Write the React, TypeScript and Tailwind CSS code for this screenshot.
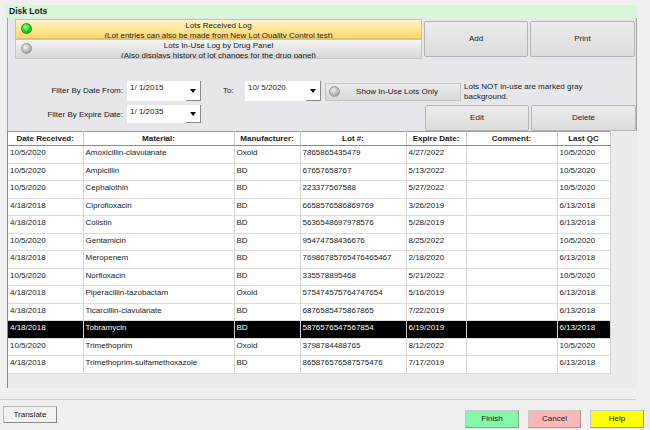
import React from 'react';

type Lot = {
  received: string;
  material: string;
  maker: string;
  lot: string;
  expire: string;
  comment: string;
  lastQc: string;
  selected?: boolean;
};

const lots: Lot[] = [
  { received: '10/5/2020', material: 'Amoxicillin-clavulanate', maker: 'Oxoid', lot: '7865865435479', expire: '4/27/2022', comment: '', lastQc: '10/5/2020' },
  { received: '10/5/2020', material: 'Ampicillin', maker: 'BD', lot: '67657658767', expire: '5/13/2022', comment: '', lastQc: '10/5/2020' },
  { received: '10/5/2020', material: 'Cephalothin', maker: 'BD', lot: '223377567588', expire: '5/27/2022', comment: '', lastQc: '10/5/2020' },
  { received: '4/18/2018', material: 'Ciprofloxacin', maker: 'BD', lot: '6658576586869769', expire: '3/26/2019', comment: '', lastQc: '6/13/2018' },
  { received: '4/18/2018', material: 'Colistin', maker: 'BD', lot: '5636548697978576', expire: '5/28/2019', comment: '', lastQc: '6/13/2018' },
  { received: '10/5/2020', material: 'Gentamicin', maker: 'BD', lot: '95474758436676', expire: '8/25/2022', comment: '', lastQc: '10/5/2020' },
  { received: '4/18/2018', material: 'Meropenem', maker: 'BD', lot: '76986785765476465467', expire: '2/18/2020', comment: '', lastQc: '6/13/2018' },
  { received: '10/5/2020', material: 'Norfloxacin', maker: 'BD', lot: '335578895468', expire: '5/21/2022', comment: '', lastQc: '10/5/2020' },
  { received: '4/18/2018', material: 'Piperacillin-tazobactam', maker: 'Oxoid', lot: '575474575764747654', expire: '5/16/2019', comment: '', lastQc: '6/13/2018' },
  { received: '4/18/2018', material: 'Ticarcillin-clavulanate', maker: 'BD', lot: '6876585475867865', expire: '7/22/2019', comment: '', lastQc: '6/13/2018' },
  { received: '4/18/2018', material: 'Tobramycin', maker: 'BD', lot: '5876576547567854', expire: '6/19/2019', comment: '', lastQc: '6/13/2018', selected: true },
  { received: '10/5/2020', material: 'Trimethoprim', maker: 'Oxoid', lot: '3798784488765', expire: '8/12/2022', comment: '', lastQc: '10/5/2020' },
  { received: '4/18/2018', material: 'Trimethoprim-sulfamethoxazole', maker: 'BD', lot: '865876576587575476', expire: '7/17/2019', comment: '', lastQc: '6/13/2018' },
];

const columns = [
  { label: 'Date Received:', width: 'w-[75px]' },
  { label: 'Material:', width: 'w-[151px]' },
  { label: 'Manufacturer:', width: 'w-[66px]' },
  { label: 'Lot #:', width: 'w-[106px]' },
  { label: 'Expire Date:', width: 'w-[60px]' },
  { label: 'Comment:', width: 'w-[91px]' },
  { label: 'Last QC', width: 'w-[53px]' },
];

function Led({ on }: { on: boolean }) {
  return (
    <span
      className={
        on
          ? 'block w-[11px] h-[11px] rounded-full border border-[#2a8a2a] bg-[radial-gradient(circle_at_40%_35%,#b6ffb6_0%,#22e022_45%,#0c9a0c_100%)]'
          : 'block w-[11px] h-[11px] rounded-full border border-[#9a9a9a] bg-[radial-gradient(circle_at_40%_35%,#f4f4f4_0%,#bdbdbd_50%,#8e8e8e_100%)]'
      }
    />
  );
}

function DateBox({ value, width, height }: { value: string; width: string; height: string }) {
  return (
    <div className={`flex bg-white ${width} ${height}`}>
      <span className="flex-1 pl-[3px] pt-[2px] leading-[10px]">{value}</span>
      <span className="w-[15px] flex items-center justify-center border-r border-b border-[#8a8a8a]">
        <span className="block w-0 h-0 border-l-[3px] border-r-[3px] border-t-[4px] border-l-transparent border-r-transparent border-t-black" />
      </span>
    </div>
  );
}

function PanelButton({ children, className }: { children: React.ReactNode; className: string }) {
  return (
    <button
      className={`flex items-center justify-center rounded-[2px] border border-[#b4b4b4] bg-[linear-gradient(#ececec,#dcdcdc)] text-[#222] ${className}`}
    >
      {children}
    </button>
  );
}

export default function App() {
  return (
    <div className="w-[650px] h-[430px] overflow-hidden bg-[#f0f0f0] text-[8px] text-[#1a1a1a] font-['Liberation_Sans',Arial,sans-serif]">
      <div className="pl-[5px] pt-[5px]">
        {/* title bar */}
        <div className="w-[632px] h-[13px] bg-[#d6f8d9] font-bold pl-[4px] leading-[13px] text-[8.5px]">Disk Lots</div>

        {/* filter panel */}
        <div className="ml-[2px] w-[630px] h-[113px] bg-[#e6e6eb] border-l border-r border-[#a4a4a4]">
          <div className="flex pt-[1px]">
            <div className="ml-[7px] w-[407px] flex flex-col">
              <div className="relative h-[20px] overflow-hidden border border-[#e0c070] bg-[linear-gradient(#fff6c8,#ffd76a)] text-center leading-[9.5px] pt-[1px]">
                <span className="absolute left-[5px] top-[3px]"><Led on /></span>
                <div>Lots Received Log</div>
                <div>(Lot entries can also be made from New Lot Quality Control test)</div>
              </div>
              <div className="relative h-[20px] overflow-hidden border border-[#c4c4c4] bg-[linear-gradient(#f6f6f6,#d6d6d6)] text-center leading-[9.5px] pt-[1px]">
                <span className="absolute left-[5px] top-[3px]"><Led on={false} /></span>
                <div>Lots In-Use Log by Drug Panel</div>
                <div>(Also displays history of lot changes for the drug panel)</div>
              </div>
            </div>
            <div className="ml-[2px] mt-[2px] flex gap-[2px]">
              <PanelButton className="w-[104px] h-[36px]">Add</PanelButton>
              <PanelButton className="w-[105px] h-[36px]">Print</PanelButton>
            </div>
          </div>

          <div className="flex items-start mt-[22px]">
            <div className="w-[115px] text-right pt-[4px]">Filter By Date From:</div>
            <div className="ml-[4px]">
              <DateBox value="1/  1/2015" width="w-[74px]" height="h-[20px]" />
            </div>
            <div className="ml-[22px] w-[22px] pt-[4px]">To:</div>
            <DateBox value="10/  5/2020" width="w-[76px]" height="h-[20px]" />
            <div className="ml-[4px] mt-[2px] relative w-[136px] h-[18px] flex items-center justify-center border border-[#c4c4c4] bg-[linear-gradient(#ececec,#d8d8d8)]">
              <span className="absolute left-[3px] top-[2px]"><Led on={false} /></span>
              <span className="pl-[8px]">Show In-Use Lots Only</span>
            </div>
            <div className="ml-[3px] w-[160px] leading-[10px] pt-[1px]">Lots NOT in-use are marked gray background.</div>
          </div>

          <div className="flex items-start mt-[3px]">
            <div className="w-[115px] text-right pt-[4px]">Filter By Expire Date:</div>
            <div className="ml-[4px]">
              <DateBox value="1/  1/2035" width="w-[74px]" height="h-[18px]" />
            </div>
            <div className="ml-[224px] flex gap-[2px]">
              <PanelButton className="w-[104px] h-[26px]">Edit</PanelButton>
              <PanelButton className="w-[105px] h-[26px]">Delete</PanelButton>
            </div>
          </div>
        </div>

        {/* lots grid */}
        <div className="ml-[2px] w-[630px] h-[257px] bg-[#ececec] border-l border-[#8c8c8c]">
          <table className="table-fixed border-collapse w-[602px]">
            <thead>
              <tr className="h-[14px] bg-white">
                {columns.map((c) => (
                  <th
                    key={c.label}
                    className={`${c.width} p-0 font-bold text-center leading-[12px] border-t border-b border-r border-t-[#9a9a9a] border-b-[#8a8a8a] border-r-[#cfcfcf]`}
                  >
                    {c.label}
                  </th>
                ))}
              </tr>
            </thead>
            <tbody>
              {lots.map((l) => {
                const cells = [l.received, l.material, l.maker, l.lot, l.expire, l.comment, l.lastQc];
                return (
                  <tr key={l.material} className={l.selected ? 'h-[17.5px] bg-black text-white' : 'h-[17.5px] bg-white'}>
                    {cells.map((v, i) => (
                      <td
                        key={i}
                        className="p-0 pl-[2px] align-top pt-[2px] leading-[10px] whitespace-nowrap overflow-hidden border-r border-b border-r-[#d4d4d4] border-b-[#dcdcdc]"
                      >
                        {v}
                      </td>
                    ))}
                  </tr>
                );
              })}
            </tbody>
          </table>
        </div>
      </div>

      <div className="mt-[11px] w-[636px] h-px bg-[#cfcfcf]" />

      {/* footer buttons */}
      <div className="flex items-start mt-[6px]">
        <button className="ml-[3px] w-[54px] h-[17px] border border-[#b8b8b8] border-r-[#8a8a8a] border-b-[#8a8a8a] bg-[#f2f2f2] leading-[15px]">
          Translate
        </button>
        <button className="ml-[408px] mt-[4px] w-[54px] h-[18px] border border-[#c8c8c8] border-r-[#9a9a9a] border-b-[#9a9a9a] bg-[#86f6a8]">
          Finish
        </button>
        <button className="ml-[9px] mt-[4px] w-[53px] h-[18px] border border-[#c8c8c8] border-r-[#9a9a9a] border-b-[#9a9a9a] bg-[#ffb6b6]">
          Cancel
        </button>
        <button className="ml-[9px] mt-[4px] w-[54px] h-[18px] border border-[#c8c8c8] border-r-[#9a9a9a] border-b-[#9a9a9a] bg-[#ffff00]">
          Help
        </button>
      </div>
    </div>
  );
}
